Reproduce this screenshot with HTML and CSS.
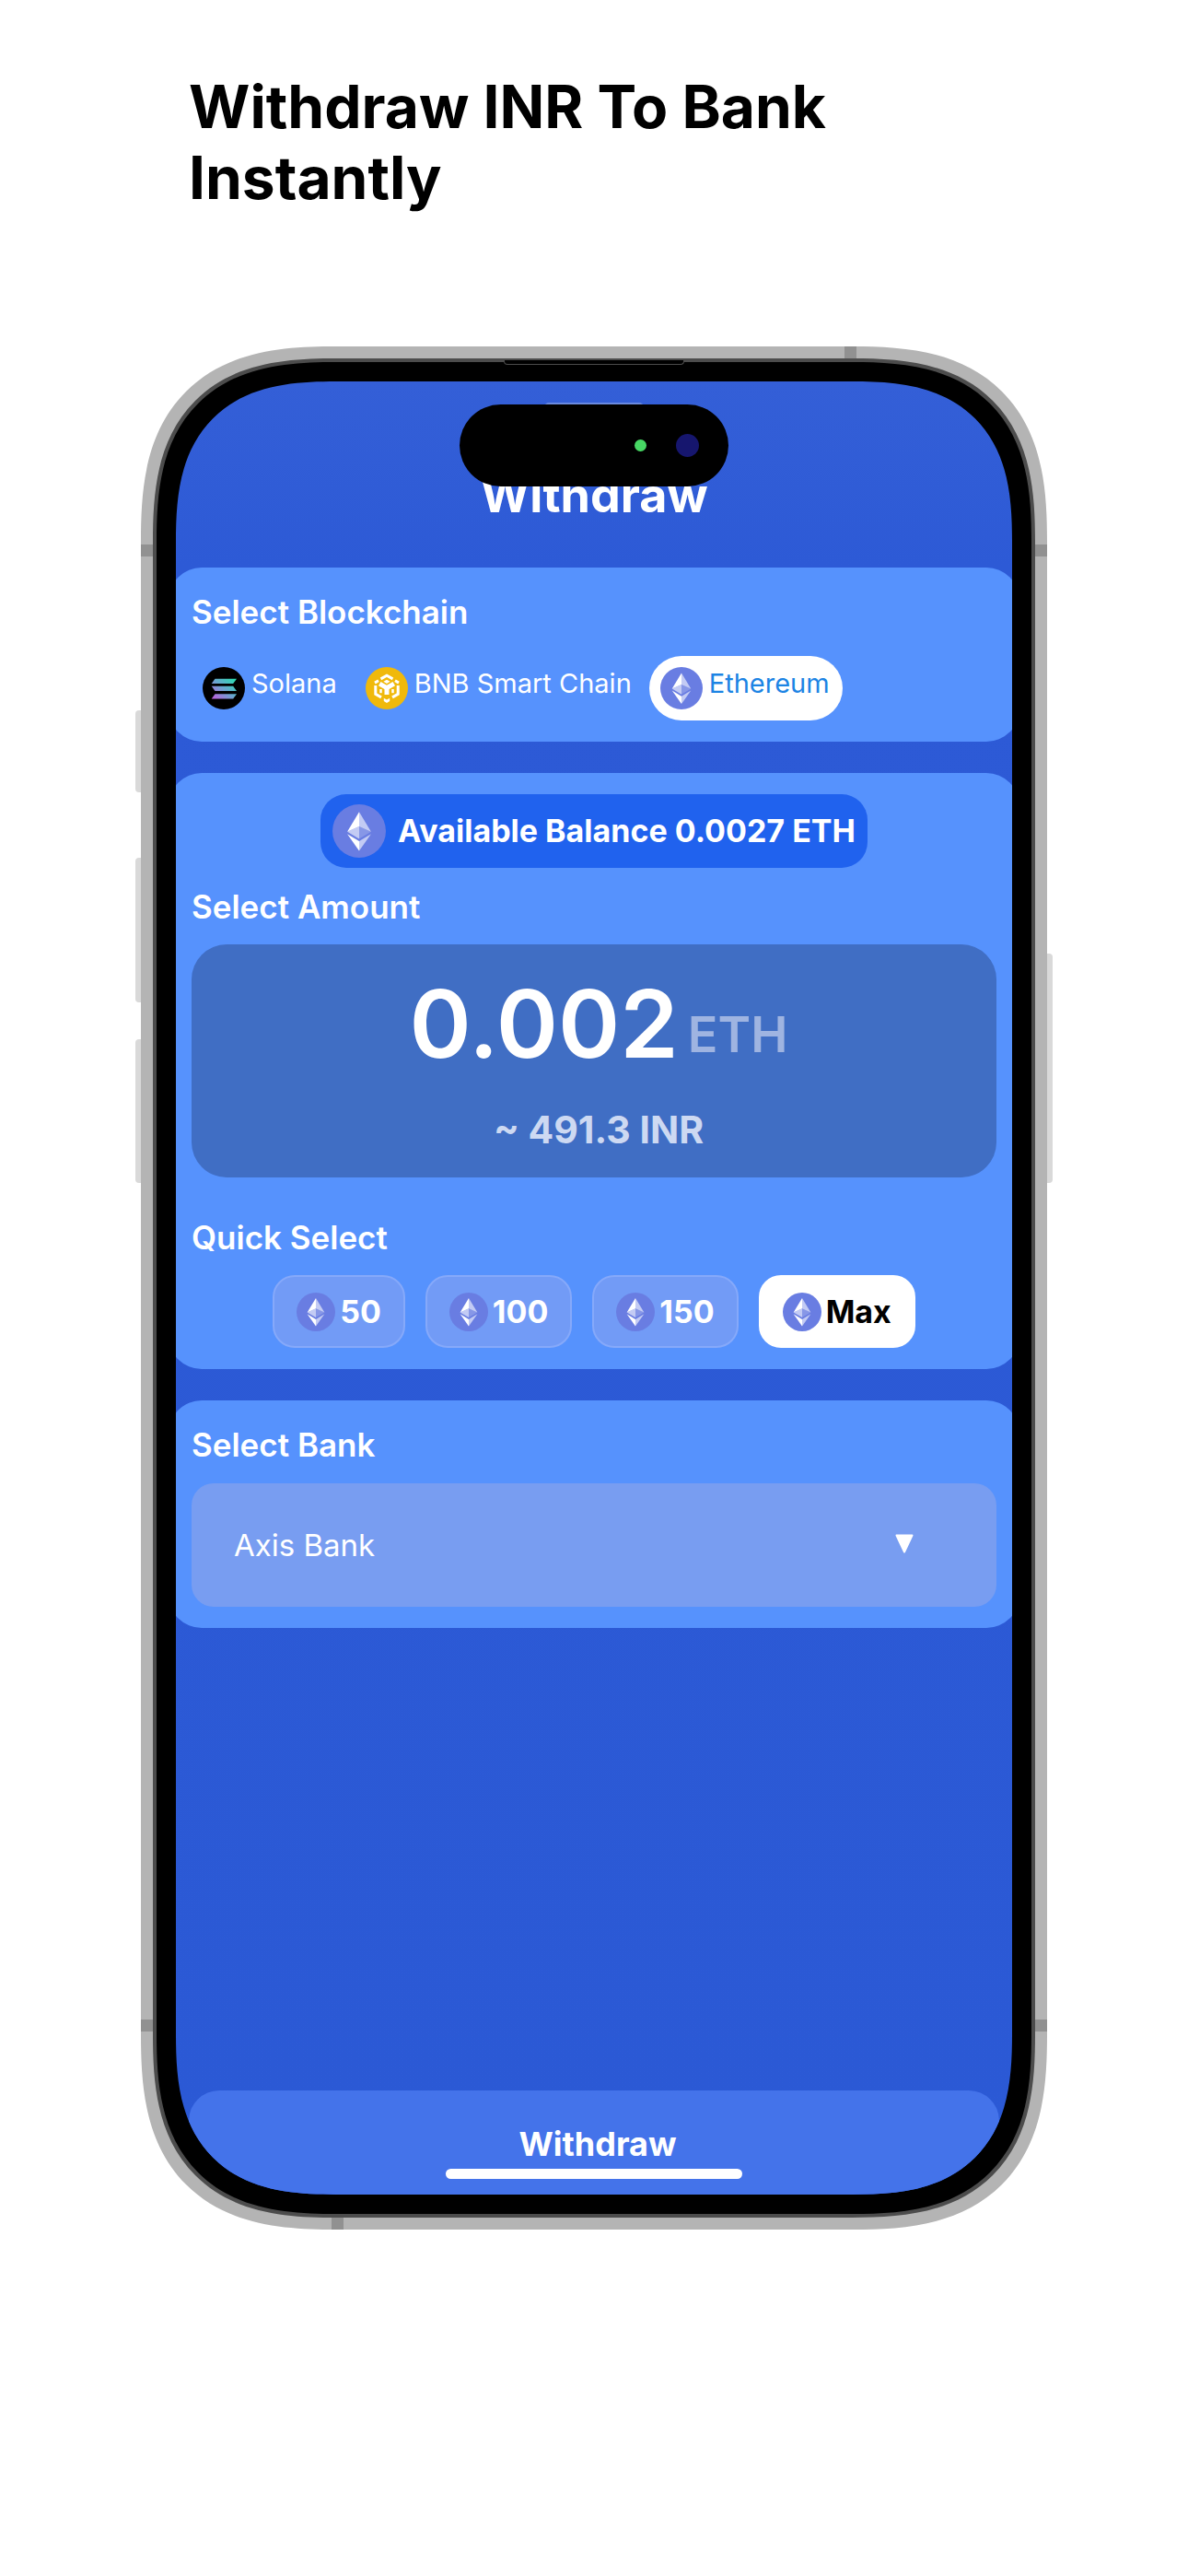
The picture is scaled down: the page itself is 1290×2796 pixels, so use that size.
FILE: index.html
```html
<!DOCTYPE html>
<html lang="en">
<head>
<meta charset="utf-8">
<meta name="viewport" content="width=device-width, initial-scale=1">
<title>Withdraw INR To Bank Instantly</title>
<link rel="stylesheet" href="styles.css">
</head>
<body>
<svg class="sprite" aria-hidden="true">
  <defs>
    <linearGradient id="sol-fill" gradientUnits="userSpaceOnUse" x1="12" y1="36" x2="34" y2="11">
      <stop offset="0" stop-color="#c05be0"/>
      <stop offset="0.5" stop-color="#6aa5cf"/>
      <stop offset="1" stop-color="#27e0b0"/>
    </linearGradient>
    <symbol id="icon-sol" viewBox="0 0 46 46">
      <circle cx="23" cy="23" r="23" fill="#000"/>
      <g fill="url(#sol-fill)">
        <path d="M13.500 12.700h23.500l-3.800 5.300H9.700z"/>
        <path d="M9.700 20.800h23.500l3.800 5.300H13.500z"/>
        <path d="M13.500 29.200h23.500l-3.800 5.300H9.700z"/>
      </g>
    </symbol>
    <symbol id="icon-bnb" viewBox="0 0 46 46">
      <circle cx="23" cy="23" r="23" fill="#f0b90b"/>
      <g fill="none" stroke="#fff" stroke-width="3">
        <path d="M16.500 12.900L23 9.200l6.500 3.700"/>
        <path d="M10.800 20v9.300l6.200 3.600"/>
        <path d="M35.200 20v9.300L29 32.900"/>
        <path d="M10 17.100l4-2.300"/>
        <path d="M36 17.100l-4-2.300"/>
        <path stroke-width="5" d="M15.200 18.200L23 22.700l7.800-4.500"/>
        <path stroke-width="5" d="M23 21.500v8.500"/>
        <path stroke-width="2.500" d="M16.500 24v4.200"/>
        <path stroke-width="2.500" d="M29.500 24v4.200"/>
      </g>
      <path fill="#fff" d="M23 13.700l3.600 2.100-3.600 2.100-3.600-2.100zM19.800 33.800l3.200 1.600 3.200-1.600v3.200L23 39l-3.200-2z"/>
    </symbol>
    <symbol id="icon-eth" viewBox="0 0 32 32">
      <circle cx="16" cy="16" r="16" fill="#697de2"/>
      <g fill="#fff" transform="translate(.33 .7) scale(.95 .97)">
        <path fill-opacity=".602" d="M16.498 4v8.870l7.497 3.350z"/>
        <path d="M16.498 4L9 16.220l7.498-3.350z"/>
        <path fill-opacity=".602" d="M16.498 21.968v6.027L24 17.616z"/>
        <path d="M16.498 27.995v-6.028L9 17.616z"/>
        <path fill-opacity=".2" d="M16.498 20.573l7.497-4.353-7.497-3.348z"/>
        <path fill-opacity=".602" d="M9 16.220l7.498 4.353v-7.701z"/>
      </g>
    </symbol>
  </defs>
</svg>

<main class="page">
  <h1 class="headline">Withdraw INR To Bank Instantly</h1>

  <div class="phone">
    <span class="side-key key-action"></span>
    <span class="side-key key-up"></span>
    <span class="side-key key-down"></span>
    <span class="side-key key-power"></span>
    <div class="frame">
      <span class="band band-top"></span>
      <span class="band band-bottom"></span>
      <span class="band band-left-high"></span>
      <span class="band band-left-low"></span>
      <span class="band band-right-high"></span>
      <span class="band band-right-low"></span>
      <div class="rim">
        <div class="bezel">
          <span class="speaker"></span>
          <div class="screen">
            <span class="grabber"></span>
            <div class="island"><span class="dot"></span><span class="camera"></span></div>

            <header class="app-bar"><h2 class="app-title">Withdraw</h2></header>

            <form class="cards">
              <section class="card">
                <h3 class="label">Select Blockchain</h3>
                <div class="chains">
                  <button type="button" class="chain"><svg class="coin coin-m" aria-hidden="true"><use href="#icon-sol"/></svg>Solana</button>
                  <button type="button" class="chain"><svg class="coin coin-m" aria-hidden="true"><use href="#icon-bnb"/></svg>BNB Smart Chain</button>
                  <button type="button" class="chain chain-on" aria-pressed="true"><svg class="coin coin-m" aria-hidden="true"><use href="#icon-eth"/></svg>Ethereum</button>
                </div>
              </section>

              <section class="card">
                <p class="balance"><svg class="coin coin-l" aria-hidden="true"><use href="#icon-eth"/></svg>Available Balance 0.0027 ETH</p>
                <h3 class="label label-amount">Select Amount</h3>
                <div class="amount">
                  <p class="amount-main"><span class="amount-value">0.002</span><span class="amount-unit">ETH</span></p>
                  <p class="amount-fiat">~ 491.3 INR</p>
                </div>
                <h3 class="label label-quick">Quick Select</h3>
                <div class="quick">
                  <button type="button" class="preset"><svg class="coin coin-s" aria-hidden="true"><use href="#icon-eth"/></svg>50</button>
                  <button type="button" class="preset"><svg class="coin coin-s" aria-hidden="true"><use href="#icon-eth"/></svg>100</button>
                  <button type="button" class="preset"><svg class="coin coin-s" aria-hidden="true"><use href="#icon-eth"/></svg>150</button>
                  <button type="button" class="preset preset-on" aria-pressed="true"><svg class="coin coin-s" aria-hidden="true"><use href="#icon-eth"/></svg>Max</button>
                </div>
              </section>

              <section class="card">
                <label class="label" for="bank">Select Bank</label>
                <div class="bank">
                  <select id="bank" class="bank-select"><option>Axis Bank</option></select>
                  <svg class="bank-arrow" viewBox="0 0 20 21" aria-hidden="true"><path d="M1.500 1.500h17L10 19.500z" fill="#fff" stroke="#fff" stroke-width="2" stroke-linejoin="round"/></svg>
                </div>
              </section>
            </form>

            <button type="button" class="submit">Withdraw</button>
            <span class="home-bar"></span>
          </div>
        </div>
      </div>
    </div>
  </div>
</main>
</body>
</html>
```
FILE: styles.css
```css
*,
*::before,
*::after {
  box-sizing: border-box;
}

body {
  margin: 0;
  background: #fff;
  color: #000;
  font-family: Inter, "Liberation Sans", sans-serif;
}

h1,
h2,
h3,
p {
  margin: 0;
}

button,
select {
  margin: 0;
  font: inherit;
  color: inherit;
  border: 0;
  background: none;
}

.sprite {
  position: absolute;
  width: 0;
  height: 0;
}

.page {
  max-width: 1016px;
  margin: 0 auto;
  padding: 77px 16px 120px;
}

.headline {
  max-width: 880px;
  padding-left: 52px;
  font-size: 64px;
  font-weight: 700;
  line-height: 77px;
}

/* Phone hardware */
.phone {
  position: relative;
  margin-top: 145px;
}

.side-key {
  position: absolute;
  width: 6px;
  background: #d9d9d9;
}

.key-action,
.key-up,
.key-down {
  left: -6px;
  border-radius: 4px 0 0 4px;
}

.key-action {
  top: 395px;
  height: 89px;
}

.key-up {
  top: 555px;
  height: 157px;
}

.key-down {
  top: 752px;
  height: 156px;
}

.key-power {
  right: -6px;
  top: 659px;
  height: 249px;
  border-radius: 0 4px 4px 0;
}

.frame {
  position: relative;
  padding: 13px;
  background: #b4b4b4;
  border-radius: 167px;
}

.rim {
  position: relative;
  padding: 4px;
  background: #4c4c4c;
  border-radius: 154px;
}

.bezel {
  position: relative;
  padding: 21px;
  background: #000;
  border-radius: 150px;
}

.screen {
  position: relative;
  display: flex;
  flex-direction: column;
  min-height: 1968px;
  overflow: hidden;
  color: #fff;
  background: linear-gradient(#345fd7, #2d5ad6 200px, #2b59d5);
  border-radius: 129px;
}

/* Continuous corners where the browser can draw them */
@supports (corner-shape: superellipse(1.4)) {
  .frame,
  .rim,
  .bezel,
  .screen {
    corner-shape: superellipse(1.4);
  }

  .frame {
    border-radius: 212px;
  }

  .rim {
    border-radius: 199px;
  }

  .bezel {
    border-radius: 195px;
  }

  .screen {
    border-radius: 174px;
  }
}

.band {
  position: absolute;
  width: 13px;
  height: 13px;
  background: #919191;
}

.band-top {
  top: 0;
  right: 207px;
}

.band-bottom {
  bottom: 0;
  left: 207px;
}

.band-left-high,
.band-right-high {
  top: 215px;
}

.band-left-low,
.band-right-low {
  bottom: 215px;
}

.band-left-high,
.band-left-low {
  left: 0;
}

.band-right-high,
.band-right-low {
  right: 0;
}

.speaker {
  position: absolute;
  top: -2px;
  left: 50%;
  width: 196px;
  height: 5px;
  margin-left: -98px;
  background: #000;
  border: solid #4c4c4c;
  border-width: 0 1px 1px;
  border-radius: 0 0 4px 4px;
}

.grabber {
  position: absolute;
  top: 23px;
  left: 50%;
  width: 108px;
  height: 10px;
  margin-left: -54px;
  background: #6a8adf;
  border-radius: 5px;
}

.island {
  position: absolute;
  z-index: 1;
  top: 25px;
  left: 50%;
  display: flex;
  align-items: center;
  justify-content: flex-end;
  gap: 32px;
  width: 292px;
  height: 89px;
  margin-left: -146px;
  padding-right: 32px;
  background: #000;
  border-radius: 45px;
}

.dot {
  width: 13px;
  height: 13px;
  background: #47d764;
  border-radius: 50%;
}

.camera {
  width: 25px;
  height: 25px;
  background: #16166e;
  border-radius: 50%;
}

.home-bar {
  position: absolute;
  bottom: 17px;
  left: 50%;
  width: 322px;
  height: 11px;
  margin-left: -161px;
  background: #fff;
  border-radius: 6px;
}

/* App */
.app-bar {
  padding: 92px 16px 46px;
  text-align: center;
}

.app-title {
  font-size: 52px;
  font-weight: 700;
  line-height: 64px;
}

.cards {
  display: flex;
  flex-direction: column;
  gap: 34px;
  margin: 0 -8px;
}

.card {
  display: flex;
  flex-direction: column;
  padding: 23px 25px;
  background: #5692fd;
  border-radius: 36px;
}

.label {
  font-size: 35px;
  font-weight: 600;
  line-height: 50px;
}

.label-amount {
  margin-top: 17px;
}

.label-quick {
  margin-top: 40px;
}

.coin {
  flex: none;
}

.coin-s {
  width: 42px;
  height: 42px;
}

.coin-m {
  width: 46px;
  height: 46px;
}

.coin-l {
  width: 58px;
  height: 58px;
}

.chains {
  display: flex;
  flex-wrap: wrap;
  gap: 5px;
  margin-top: 23px;
}

.chain {
  display: flex;
  align-items: flex-start;
  gap: 7px;
  padding: 12px 14px 12px 12px;
  font-size: 29px;
  font-weight: 400;
  line-height: 36px;
  border-radius: 35px;
}

.chain-on {
  color: #1c84e4;
  background: #fff;
}

.balance {
  display: flex;
  align-self: center;
  align-items: center;
  gap: 13px;
  padding: 11px 13px;
  font-size: 34px;
  font-weight: 700;
  line-height: 48px;
  background: #2062ee;
  border-radius: 28px;
}

.amount {
  margin-top: 16px;
  padding: 26px 16px 28px 26px;
  text-align: center;
  background: #406ec4;
  border-radius: 38px;
}

.amount-main {
  display: flex;
  align-items: center;
  justify-content: center;
  gap: 10px;
}

.amount-value {
  font-size: 102px;
  font-weight: 600;
  line-height: 120px;
}

.amount-unit {
  padding-top: 24px;
  font-size: 54px;
  font-weight: 600;
  line-height: 64px;
  color: #9fb4e1;
}

.amount-fiat {
  margin-top: 31px;
  font-size: 41px;
  font-weight: 700;
  line-height: 48px;
  color: #cdd9f2;
}

.quick {
  display: flex;
  flex-wrap: wrap;
  justify-content: center;
  gap: 22px;
  margin-top: 16px;
}

.preset {
  display: flex;
  align-items: center;
  gap: 5px;
  height: 79px;
  padding: 0 24px;
  font-size: 34px;
  font-weight: 700;
  line-height: 48px;
  background: #729bf6;
  border: 2px solid #86a9fa;
  border-radius: 24px;
}

.preset-on {
  color: #000;
  background: #fff;
  border-color: #fff;
}

.bank {
  position: relative;
  margin-top: 17px;
}

.bank-select {
  display: block;
  width: 100%;
  height: 134px;
  padding: 0 110px 0 46px;
  font-size: 33px;
  font-weight: 400;
  appearance: none;
  background: #789df1;
  border-radius: 24px;
}

.bank-arrow {
  position: absolute;
  top: 55px;
  right: 90px;
  width: 20px;
  height: 21px;
  pointer-events: none;
}

.submit {
  height: 116px;
  margin: auto 14px -3px;
  padding: 0 0 0 8px;
  font-size: 36px;
  font-weight: 700;
  background: #4473ea;
  border-radius: 33px;
}
```
